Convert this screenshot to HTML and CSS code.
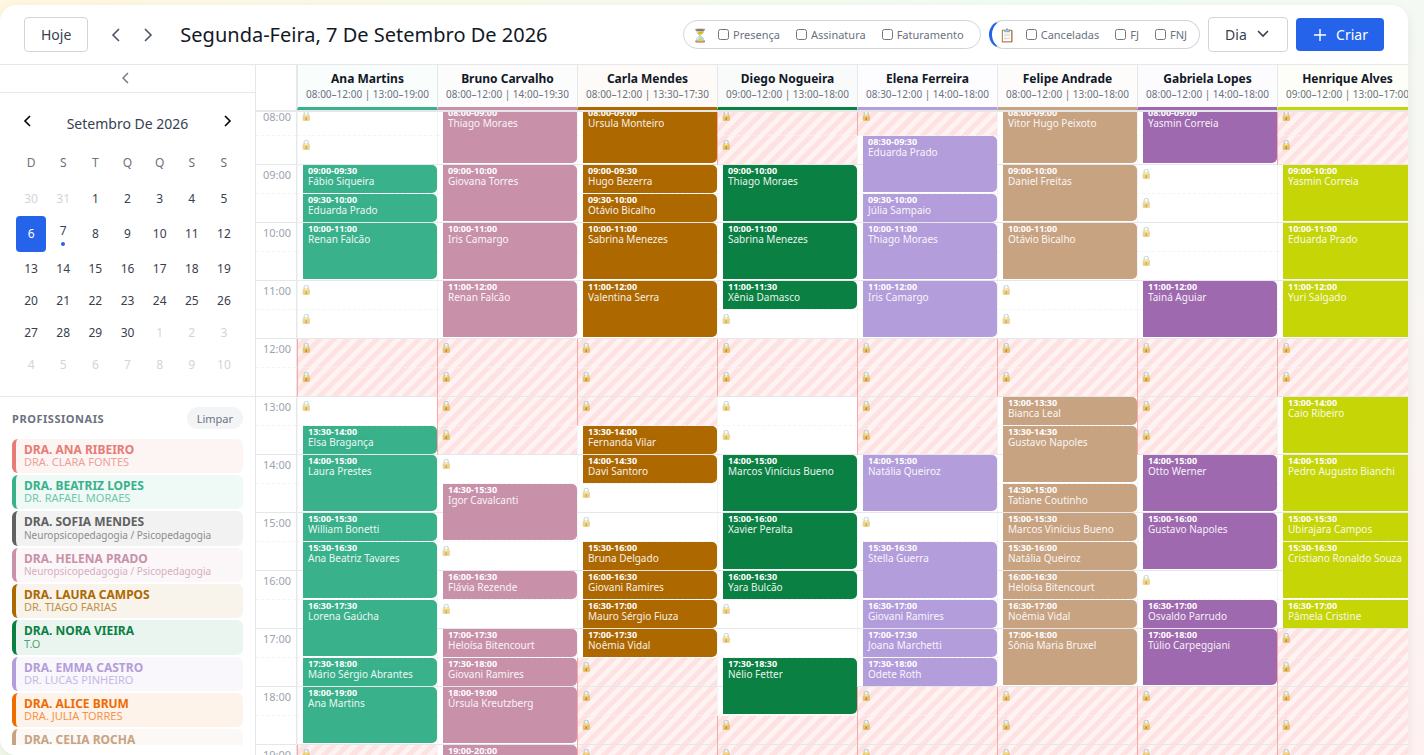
FILE: index.html
```html
<!DOCTYPE html>
<html lang="pt-BR">
<head>
<meta charset="utf-8">
<meta name="viewport" content="width=device-width, initial-scale=1">
<title>Agenda</title>
<link rel="stylesheet" href="styles.css">
</head>
<body>
<div class="panel">
  <header class="topbar">
    <button class="btn" type="button">Hoje</button>
    <div class="pager">
      <button class="icon-btn" type="button" aria-label="Dia anterior"><svg width="20" height="20" viewBox="0 0 20 20"><path d="M13 4 L7 10 L13 16"/></svg></button>
      <button class="icon-btn" type="button" aria-label="Próximo dia"><svg width="20" height="20" viewBox="0 0 20 20"><path d="M7 4 L13 10 L7 16"/></svg></button>
    </div>
    <h1 class="title">Segunda-Feira, 7 De Setembro De 2026</h1>
    <div class="filters">
      <span class="emoji">⏳</span>
      <label class="check"><input type="checkbox">Presença</label>
      <label class="check"><input type="checkbox">Assinatura</label>
      <label class="check"><input type="checkbox">Faturamento</label>
    </div>
    <div class="filters filters-status">
      <span class="emoji">📋</span>
      <label class="check"><input type="checkbox">Canceladas</label>
      <label class="check"><input type="checkbox">FJ</label>
      <label class="check"><input type="checkbox">FNJ</label>
    </div>
    <div class="view">
      <select class="view-select" aria-label="Visualização"><option>Dia</option><option>Semana</option><option>Mês</option></select>
      <svg class="view-arrow" width="16" height="16" viewBox="0 0 16 16"><path d="M3 5 L8 10 L13 5"/></svg>
    </div>
    <button class="btn-create" type="button"><svg width="16" height="16" viewBox="0 0 16 16"><path d="M8 2 V14 M2 8 H14"/></svg>Criar</button>
  </header>

  <div class="main">
    <aside class="sidebar">
      <button class="collapse" type="button" aria-label="Recolher"><svg width="16" height="16" viewBox="0 0 16 16"><path d="M10 3 L5 8 L10 13"/></svg></button>
      <section class="month">
        <div class="month-head">
          <button class="month-nav" type="button" aria-label="Mês anterior"><svg width="16" height="16" viewBox="0 0 16 16"><path d="M10 3 L5 8 L10 13"/></svg></button>
          <h2 class="month-title">Setembro De 2026</h2>
          <button class="month-nav" type="button" aria-label="Próximo mês"><svg width="16" height="16" viewBox="0 0 16 16"><path d="M6 3 L11 8 L6 13"/></svg></button>
        </div>
        <div class="weekdays"><span>D</span><span>S</span><span>T</span><span>Q</span><span>Q</span><span>S</span><span>S</span></div>
        <div class="days" id="days"></div>
      </section>
      <section class="pros">
        <div class="pros-head"><h2 class="pros-title">PROFISSIONAIS</h2><button class="clear" type="button">Limpar</button></div>
        <div class="pros-list">
          <button type="button" class="pro c-coral"><b>DRA. ANA RIBEIRO</b><span>DRA. CLARA FONTES</span></button>
          <button type="button" class="pro c-green"><b>DRA. BEATRIZ LOPES</b><span>DR. RAFAEL MORAES</span></button>
          <button type="button" class="pro c-gray pro-tall"><b>DRA. SOFIA MENDES</b><span class="area">Neuropsicopedagogia / Psicopedagogia</span></button>
          <button type="button" class="pro c-pink"><b>DRA. HELENA PRADO</b><span class="area">Neuropsicopedagogia / Psicopedagogia</span></button>
          <button type="button" class="pro c-brown"><b>DRA. LAURA CAMPOS</b><span>DR. TIAGO FARIAS</span></button>
          <button type="button" class="pro c-forest pro-tall"><b>DRA. NORA VIEIRA</b><span>T.O</span></button>
          <button type="button" class="pro c-lavender"><b>DRA. EMMA CASTRO</b><span>DR. LUCAS PINHEIRO</span></button>
          <button type="button" class="pro c-orange"><b>DRA. ALICE BRUM</b><span>DRA. JULIA TORRES</span></button>
          <button type="button" class="pro c-tan"><b>DRA. CELIA ROCHA</b></button>
        </div>
      </section>
    </aside>

    <section class="schedule">
      <div class="schedule-head" id="head"><div class="corner"></div></div>
      <div class="schedule-body" id="body"><div class="columns" id="columns"></div></div>
    </section>
  </div>
</div>
<script src="agenda.js"></script>
</body>
</html>
```
FILE: styles.css
```css
* { box-sizing: border-box; }
body {
  margin: 0;
  height: 100vh;
  overflow: hidden;
  font-family: "Noto Sans", sans-serif;
  color: #111827;
  background: linear-gradient(135deg, #fff7e0 0%, #f0fdf4 50%, #fff1f2 100%);
}
button, select, input { font: inherit; color: inherit; }
button { border: 0; padding: 0; background: none; cursor: pointer; }
h1, h2 { margin: 0; font-weight: 400; }
svg { display: block; fill: none; stroke: currentColor; stroke-width: 2; }

.c-coral { --c: #e67c73; }
.c-green { --c: #39b18b; }
.c-gray { --c: #616161; }
.c-pink { --c: #c891a9; }
.c-brown { --c: #ad6800; }
.c-forest { --c: #0b8043; }
.c-lavender { --c: #b39ddb; }
.c-orange { --c: #ef6c00; }
.c-tan { --c: #c8a382; }
.c-purple { --c: #9e69af; }
.c-lime { --c: #c6d506; }

.panel {
  display: flex;
  flex-direction: column;
  height: calc(100vh - 5px);
  margin: 5px 16px 0 0;
  background: #fff;
  border-radius: 16px 16px 0 16px;
  overflow: hidden;
  box-shadow: 0 4px 12px rgba(0, 0, 0, 0.08);
}

.topbar {
  display: flex;
  align-items: center;
  flex: none;
  gap: 8px;
  height: 60px;
  padding: 0 24px;
  border-bottom: 1px solid #e5e7eb;
}
.btn {
  height: 35px;
  padding: 0 16px;
  border: 1px solid #d1d5db;
  border-radius: 4px;
  font-size: 14px;
  color: #374151;
}
.pager { display: flex; margin: 0 8px 0 4px; }
.icon-btn { display: grid; place-items: center; width: 32px; height: 32px; color: #4b5563; }
.icon-btn svg { stroke-width: 1.6; }
.title { flex: 1; font-size: 20px; white-space: nowrap; }
.filters {
  display: flex;
  align-items: center;
  gap: 16px;
  height: 29px;
  padding: 0 16px 0 7px;
  border: 1px solid #d1d5db;
  border-radius: 15px;
}
.filters-status { padding: 0 12px 0 7px; border-left: 3px solid #2563eb; }
.emoji { width: 17px; margin-right: -6px; font-size: 13px; text-align: center; }
.check { display: flex; align-items: center; gap: 4px; font-size: 11px; color: #6b7280; }
.check input { width: 11px; height: 11px; margin: 0; }
.view { position: relative; }
.view-select {
  appearance: none;
  width: 80px;
  height: 35px;
  padding: 0 16px;
  border: 1px solid #d1d5db;
  border-radius: 4px;
  background: #fff;
  font-size: 14px;
  color: #374151;
}
.view-arrow { position: absolute; right: 17px; top: 9px; color: #374151; stroke-width: 1.6; pointer-events: none; }
.btn-create {
  display: flex;
  align-items: center;
  gap: 8px;
  height: 33px;
  padding: 0 16px;
  border-radius: 4px;
  background: #2563eb;
  color: #fff;
  font-size: 14px;
}
.btn-create svg { stroke-width: 1.4; }

.main { display: flex; flex: 1; min-height: 0; }
.sidebar {
  display: flex;
  flex-direction: column;
  flex: none;
  width: 256px;
  padding-bottom: 10px;
  border-right: 1px solid #e5e7eb;
}
.collapse {
  display: grid;
  place-items: center;
  flex: none;
  height: 28px;
  padding: 0 4px 2px 0;
  border-bottom: 1px solid #e5e7eb;
  color: #6b7280;
}
.collapse svg { stroke-width: 1.4; }
.month { flex: none; padding: 16px; border-bottom: 1px solid #e5e7eb; }
.month-head { display: flex; align-items: center; justify-content: space-between; height: 28px; }
.month-nav { display: grid; place-items: center; width: 24px; height: 24px; margin-bottom: 4px; color: #000; }
.month-nav svg { stroke-width: 1.6; }
.month-title { font-size: 14px; color: #374151; }
.weekdays, .days { display: grid; grid-template-columns: repeat(7, 1fr); gap: 2px; text-align: center; font-size: 12px; }
.weekdays { padding: 17px 0 13px; line-height: 17px; color: #6b7280; }
.days { grid-auto-rows: minmax(30px, auto); }
.day { padding-bottom: 2px; border-radius: 4px; color: #374151; }
.day-out { color: #d1d5db; }
.day-selected { background: #2563eb; color: #fff; }
.day-event { display: flex; flex-direction: column; align-items: center; gap: 3px; height: 36px; padding-top: 6px; line-height: 17px; }
.day-event::after { content: ""; width: 4px; height: 4px; border-radius: 2px; background: #2563eb; }

.pros { display: flex; flex-direction: column; flex: 1; min-height: 0; padding: 10px 12px 0; }
.pros-head { display: flex; align-items: center; justify-content: space-between; height: 22px; margin-bottom: 10px; }
.pros-title { font-size: 11px; font-weight: 700; letter-spacing: 0.05em; color: #6b7280; }
.clear { height: 22px; padding: 0 10px; border-radius: 11px; background: #f3f4f6; color: #6b7280; font-size: 11px; }
.pros-list { display: flex; flex-direction: column; gap: 2px; overflow: hidden; }
.pro {
  display: flex;
  flex-direction: column;
  flex: none;
  min-height: 34px;
  padding: 3px 8px 6px;
  border-left: 4px solid var(--c);
  border-radius: 6px;
  background: color-mix(in srgb, var(--c) 8%, #fff);
  color: var(--c);
  text-align: left;
}
.pro b { font-size: 12px; line-height: 15px; }
.pro span { font-size: 11px; line-height: 10px; opacity: 0.7; white-space: nowrap; }
.pro .area { font-size: 10px; }
.pro-tall b { line-height: 16px; }

.schedule { display: flex; flex-direction: column; flex: 1; min-width: 0; overflow: hidden; }
.schedule-head, .columns { display: grid; grid-template-columns: 41px repeat(8, minmax(140px, 1fr)); }
.schedule-head { flex: none; border-bottom: 2px solid #e5e7eb; }
.corner { border-right: 1px solid #e5e7eb; }
.col-head {
  height: 45px;
  padding-top: 5px;
  border-left: 1px solid #e5e7eb;
  border-bottom: 3px solid var(--c);
  background: color-mix(in srgb, var(--c) 3%, #fff);
  text-align: center;
  white-space: nowrap;
}
.col-name { display: block; font-size: 12px; font-weight: 700; line-height: 17px; }
.col-hours { display: block; font-size: 10px; line-height: 14px; color: #6b7280; }
.schedule-body { flex: 1; min-height: 0; overflow: hidden; }
.times, .column { display: grid; grid-auto-rows: 29px; }
.times { border-right: 1px solid #e5e7eb; }
.time { padding: 2px 5px 0 0; border-bottom: 1px dashed #f3f4f6; font-size: 11px; line-height: 16px; text-align: right; color: #9ca3af; }
.time:nth-child(even), .slot:nth-child(even) { border-bottom: 1px solid #e5e7eb; }
.slot {
  grid-column: 1;
  padding: 2px 2px 0;
  border-left: 1px solid #f3f4f6;
  border-bottom: 1px dashed #f3f4f6;
  font-size: 10px;
  line-height: 12px;
}
.slot span { opacity: 0.5; }
.slot-blocked {
  border-left-color: #fca5a5;
  background: repeating-linear-gradient(-45deg, #fee2e2 0 5px, #fef2f2 5px 10px);
}
.slot-blocked span { opacity: 0.6; }
.event {
  grid-column: 1;
  z-index: 1;
  margin-left: 6px;
  padding: 1px 4px 1px 5px;
  border-radius: 0 5px 5px 0;
  background: var(--c);
  color: #fff;
  text-align: left;
  white-space: nowrap;
  overflow: hidden;
  display: flex;
  flex-direction: column;
}
.event-half { height: 28px; }
.event-hour { height: 56px; }
.event b { font-size: 9px; line-height: 10px; }
.event span { font-size: 10px; line-height: 11px; opacity: 0.9; }
```
FILE: agenda.js
```javascript
const START = 8;
const END = 20;

const columns = [
  { name: "Ana Martins", hours: "08:00–12:00 | 13:00–19:00", color: "green", blocked: [[12, 13], [19, 20]], events: [
    ["09:00", "09:30", "Fábio Siqueira"], ["09:30", "10:00", "Eduarda Prado"], ["10:00", "11:00", "Renan Falcão"],
    ["13:30", "14:00", "Elsa Bragança"], ["14:00", "15:00", "Laura Prestes"], ["15:00", "15:30", "William Bonetti"],
    ["15:30", "16:30", "Ana Beatriz Tavares"], ["16:30", "17:30", "Lorena Gaúcha"], ["17:30", "18:00", "Mário Sérgio Abrantes"],
    ["18:00", "19:00", "Ana Martins"]] },
  { name: "Bruno Carvalho", hours: "08:00–12:00 | 14:00–19:30", color: "pink", blocked: [[12, 14]], events: [
    ["08:00", "09:00", "Thiago Moraes"], ["09:00", "10:00", "Giovana Torres"], ["10:00", "11:00", "Iris Camargo"],
    ["11:00", "12:00", "Renan Falcão"], ["14:30", "15:30", "Igor Cavalcanti"], ["16:00", "16:30", "Flávia Rezende"],
    ["17:00", "17:30", "Heloísa Bitencourt"], ["17:30", "18:00", "Giovani Ramires"], ["18:00", "19:00", "Úrsula Kreutzberg"],
    ["19:00", "20:00", ""]] },
  { name: "Carla Mendes", hours: "08:00–12:00 | 13:30–17:30", color: "brown", blocked: [[12, 13.5], [17.5, 20]], events: [
    ["08:00", "09:00", "Ursula Monteiro"], ["09:00", "09:30", "Hugo Bezerra"], ["09:30", "10:00", "Otávio Bicalho"],
    ["10:00", "11:00", "Sabrina Menezes"], ["11:00", "12:00", "Valentina Serra"], ["13:30", "14:00", "Fernanda Vilar"],
    ["14:00", "14:30", "Davi Santoro"], ["15:30", "16:00", "Bruna Delgado"], ["16:00", "16:30", "Giovani Ramires"],
    ["16:30", "17:00", "Mauro Sérgio Fiuza"], ["17:00", "17:30", "Noêmia Vidal"]] },
  { name: "Diego Nogueira", hours: "09:00–12:00 | 13:00–18:00", color: "forest", blocked: [[8, 9], [12, 13], [18.5, 20]], events: [
    ["09:00", "10:00", "Thiago Moraes"], ["10:00", "11:00", "Sabrina Menezes"], ["11:00", "11:30", "Xênia Damasco"],
    ["14:00", "15:00", "Marcos Vinícius Bueno"], ["15:00", "16:00", "Xavier Peralta"], ["16:00", "16:30", "Yara Bulcão"],
    ["17:30", "18:30", "Nélio Fetter"]] },
  { name: "Elena Ferreira", hours: "08:30–12:00 | 14:00–18:00", color: "lavender", blocked: [[8, 8.5], [12, 14], [18, 20]], events: [
    ["08:30", "09:30", "Eduarda Prado"], ["09:30", "10:00", "Júlia Sampaio"], ["10:00", "11:00", "Thiago Moraes"],
    ["11:00", "12:00", "Iris Camargo"], ["14:00", "15:00", "Natália Queiroz"], ["15:30", "16:30", "Stella Guerra"],
    ["16:30", "17:00", "Giovani Ramires"], ["17:00", "17:30", "Joana Marchetti"], ["17:30", "18:00", "Odete Roth"]] },
  { name: "Felipe Andrade", hours: "08:00–12:00 | 13:00–18:00", color: "tan", blocked: [[12, 13], [18, 20]], events: [
    ["08:00", "09:00", "Vitor Hugo Peixoto"], ["09:00", "10:00", "Daniel Freitas"], ["10:00", "11:00", "Otávio Bicalho"],
    ["13:00", "13:30", "Bianca Leal"], ["13:30", "14:30", "Gustavo Napoles"], ["14:30", "15:00", "Tatiane Coutinho"],
    ["15:00", "15:30", "Marcos Vinícius Bueno"], ["15:30", "16:00", "Natália Queiroz"], ["16:00", "16:30", "Heloísa Bitencourt"],
    ["16:30", "17:00", "Noêmia Vidal"], ["17:00", "18:00", "Sônia Maria Bruxel"]] },
  { name: "Gabriela Lopes", hours: "08:00–12:00 | 14:00–18:00", color: "purple", blocked: [[12, 14], [18, 20]], events: [
    ["08:00", "09:00", "Yasmin Correia"], ["11:00", "12:00", "Tainá Aguiar"], ["14:00", "15:00", "Otto Werner"],
    ["15:00", "16:00", "Gustavo Napoles"], ["16:30", "17:00", "Osvaldo Parrudo"], ["17:00", "18:00", "Túlio Carpeggiani"]] },
  { name: "Henrique Alves", hours: "09:00–12:00 | 13:00–17:00", color: "lime", blocked: [[8, 9], [12, 13], [17, 20]], events: [
    ["09:00", "10:00", "Yasmin Correia"], ["10:00", "11:00", "Eduarda Prado"], ["11:00", "12:00", "Yuri Salgado"],
    ["13:00", "14:00", "Caio Ribeiro"], ["14:00", "15:00", "Pedro Augusto Bianchi"], ["15:00", "15:30", "Ubirajara Campos"],
    ["15:30", "16:30", "Cristiano Ronaldo Souza"], ["16:30", "17:00", "Pâmela Cristine"]] }
];

const toHours = (text) => Number(text.slice(0, 2)) + Number(text.slice(3)) / 60;
const rowOf = (hour) => (hour - START) * 2 + 1;

function renderColumn(col) {
  let html = "";
  for (let h = START; h < END; h += 0.5) {
    const blocked = col.blocked.some(([a, b]) => h >= a && h < b);
    const busy = col.events.some(([a, b]) => h >= toHours(a) && h < toHours(b));
    html += `<div class="slot${blocked ? " slot-blocked" : ""}" style="grid-row:${rowOf(h)}">${busy ? "" : "<span>🔒</span>"}</div>`;
  }
  for (const [from, to, who] of col.events) {
    const span = (toHours(to) - toHours(from)) * 2;
    html += `<button type="button" class="event ${span > 1 ? "event-hour" : "event-half"}" style="grid-row:${rowOf(toHours(from))} / span ${span}"><b>${from}-${to}</b><span>${who}</span></button>`;
  }
  return `<div class="column c-${col.color}">${html}</div>`;
}

let times = "";
for (let h = START; h < END; h++) {
  times += `<div class="time">${String(h).padStart(2, "0")}:00</div><div class="time"></div>`;
}
document.getElementById("columns").innerHTML = `<div class="times">${times}</div>` + columns.map(renderColumn).join("");
document.getElementById("head").insertAdjacentHTML("beforeend", columns.map((c) =>
  `<div class="col-head c-${c.color}"><span class="col-name">${c.name}</span><span class="col-hours">${c.hours}</span></div>`).join(""));
document.getElementById("body").scrollTop = 5;

const first = new Date(2026, 7, 30);
let days = "";
for (let i = 0; i < 42; i++) {
  const d = new Date(first.getFullYear(), first.getMonth(), first.getDate() + i);
  let cls = "day";
  if (d.getMonth() !== 8) cls += " day-out";
  else if (d.getDate() === 6) cls += " day-selected";
  else if (d.getDate() === 7) cls += " day-event";
  days += `<button type="button" class="${cls}">${d.getDate()}</button>`;
}
document.getElementById("days").innerHTML = days;
```
